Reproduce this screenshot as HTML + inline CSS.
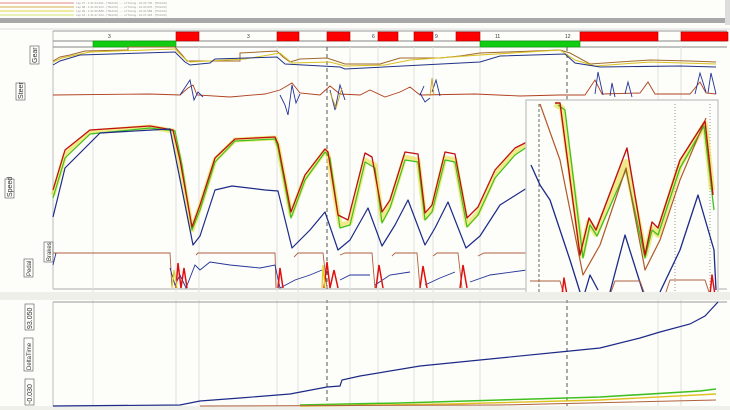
<!DOCTYPE html>
<html><head><meta charset="utf-8"><style>
html,body{margin:0;padding:0;background:#fdfdfa;width:730px;height:410px;overflow:hidden;font-family:"Liberation Sans",sans-serif}
svg{display:block}
</style></head><body>
<svg width="730" height="410" viewBox="0 0 730 410" xmlns="http://www.w3.org/2000/svg" font-family="Liberation Sans, sans-serif">
<rect width="730" height="410" fill="#fdfdf9"/>
<!-- legend -->
<g stroke-width="1.2">
<line x1="0" y1="3" x2="74" y2="3" stroke="#e8a0a0"/><line x1="0" y1="7" x2="74" y2="7" stroke="#e0c070"/>
<line x1="0" y1="11" x2="74" y2="11" stroke="#e8e070"/><line x1="0" y1="15" x2="74" y2="15" stroke="#e0ea90"/>
<line x1="0" y1="19" x2="74" y2="19" stroke="#7080c0"/>
</g>
<g font-size="3" fill="#999">
<text x="76" y="4">Lap 07 - 1:31.64.621 - [TRACK] ..... of Timing - 01:34.745 - [TRACK]</text>
<text x="76" y="8">Lap 08 - 1:31.56.913 - [TRACK] ..... of Timing - 01:34.876 - [TRACK]</text>
<text x="76" y="12">Lap 09 - 1:31.56.888 - [TRACK] ..... of Timing - 01:34.568 - [TRACK]</text>
<text x="76" y="16">Lap 10 - 1:31.47.464 - [TRACK] ..... of Timing - 01:37.418 - [TRACK]</text>
<text x="76" y="20">Lap 11 - 1:31.43.486 - [TRACK] ..... of Timing - 01:31.485 - [TRACK]</text>
</g>
<rect x="0" y="18" width="725" height="5" fill="#a8a8a8"/>
<rect x="725" y="0" width="5" height="25" fill="#ddd"/>
<!-- upper panel frame -->
<line x1="0" y1="29" x2="730" y2="29" stroke="#ddd"/>
<line x1="53" y1="31" x2="53" y2="289" stroke="#bbb"/>
<line x1="53" y1="31" x2="727" y2="31" stroke="#999"/>
<line x1="53" y1="41" x2="727" y2="41" stroke="#888"/>
<line x1="53" y1="47" x2="727" y2="47" stroke="#888"/>
<line x1="53" y1="289" x2="727" y2="289" stroke="#aaa"/>
<!-- grid -->
<g stroke="#e0e0e0">
<line x1="93" y1="47" x2="93" y2="410"/><line x1="176" y1="47" x2="176" y2="410"/><line x1="199" y1="47" x2="199" y2="410"/>
<line x1="277" y1="47" x2="277" y2="410"/><line x1="298" y1="47" x2="298" y2="410"/><line x1="350" y1="47" x2="350" y2="410"/>
<line x1="378" y1="47" x2="378" y2="410"/><line x1="414" y1="47" x2="414" y2="410"/><line x1="433" y1="47" x2="433" y2="410"/>
<line x1="480" y1="47" x2="480" y2="410"/><line x1="658" y1="47" x2="658" y2="410"/><line x1="681" y1="47" x2="681" y2="410"/>
</g>
<g stroke="#555" stroke-dasharray="4,3"><line x1="327" y1="47" x2="327" y2="410"/><line x1="567" y1="47" x2="567" y2="410"/></g>
<!-- sectors -->
<g fill="#f00" stroke="#a00" stroke-width="0.6">
<rect x="176" y="32" width="23" height="9"/><rect x="277" y="32" width="22" height="9"/><rect x="327" y="32" width="23" height="9"/>
<rect x="378" y="32" width="20" height="9"/><rect x="414" y="32" width="19" height="9"/><rect x="456" y="32" width="24" height="9"/>
<rect x="580" y="32" width="78" height="9"/><rect x="681" y="32" width="47" height="9"/>
</g>
<g fill="#1c1" stroke="#090" stroke-width="0.6"><rect x="93" y="41" width="83" height="6"/><rect x="480" y="41" width="100" height="6"/></g>
<g font-size="5" fill="#333"><text x="108" y="38">3</text><text x="247" y="38">3</text><text x="372" y="38">6</text><text x="435" y="38">9</text><text x="495" y="38">11</text><text x="565" y="38">12</text></g>
<!-- labels -->
<g font-size="7" fill="#333">
<g transform="translate(37,64) rotate(-90)"><rect x="0" y="-7" width="18" height="9" fill="none" stroke="#555" stroke-width="0.6"/><text x="1" y="0">Gear</text></g>
<g transform="translate(23,100) rotate(-90)"><rect x="0" y="-7" width="17" height="9" fill="none" stroke="#555" stroke-width="0.6"/><text x="1" y="0">Steer</text></g>
<g transform="translate(12,198) rotate(-90)"><rect x="0" y="-7" width="19" height="9" fill="none" stroke="#555" stroke-width="0.6"/><text x="1" y="0">Speed</text></g>
<g transform="translate(51,262) rotate(-90)"><rect x="0" y="-7" width="20" height="9" fill="none" stroke="#555" stroke-width="0.6"/><text x="1" y="0" font-size="6">Brakes</text></g>
<g transform="translate(31,277) rotate(-90)"><rect x="0" y="-7" width="18" height="9" fill="none" stroke="#555" stroke-width="0.6"/><text x="1" y="0" font-size="6">Pedal</text></g>
<g transform="translate(32,330) rotate(-90)"><rect x="0" y="-7" width="26" height="9" fill="none" stroke="#555" stroke-width="0.6"/><text x="1" y="0">93.050</text></g>
<g transform="translate(31,371) rotate(-90)"><rect x="0" y="-7" width="33" height="9" fill="none" stroke="#555" stroke-width="0.6"/><text x="1" y="0" font-size="6">DeltaTime</text></g>
<g transform="translate(32,405) rotate(-90)"><rect x="0" y="-7" width="26" height="9" fill="none" stroke="#555" stroke-width="0.6"/><text x="1" y="0">-0.030</text></g>
</g>
<!-- gear -->
<g fill="none" stroke-width="1">
<path d="M53 61 L60 57 L70 55 L85 51 L128 50 L128 47 L175 47 L183 56 L187 61 L240 61 L240 53 L277 51 L283 57 L290 62 L300 59 L327 58 L333 60 L345 64 L380 64 L400 58 L440 58 L460 56 L480 53 L560 50 L570 53 L590 64 L650 60 L690 61 L716 62" stroke="#a06a30"/>
<path d="M53 62 L62 58 L90 52 L175 49 L185 59 L190 62 L245 59 L280 53 L292 63 L330 62 L345 66 L385 65 L410 60 L480 55 L560 50 L575 60 L595 66 L650 62 L716 64" stroke="#d8c020"/>
<path d="M53 65 L60 61 L80 55 L175 52 L185 62 L190 65 L210 63 L215 59 L277 57 L285 64 L340 67 L345 69 L480 62 L500 56 L565 54 L575 63 L600 67 L680 66 L716 67" stroke="#223388"/>
</g>
<!-- steer -->
<g fill="none" stroke-width="0.9">
<path d="M53 95 L150 94 L180 95 L188 88 L193 85 L197 95 L230 97 L265 94 L280 90 L292 83 L300 93 L320 95 L330 86 L340 94 L360 95 L370 90 L385 97 L400 92 L410 87 L420 95 L475 94 L520 96 L560 95 L585 95 L595 80 L602 94 L640 93 L648 82 L655 94 L690 94 L700 82 L706 93 L716 94" stroke="#b04020"/>
<path d="M180 95 L190 80 L194 100 L198 92 L203 97 M280 95 L285 105 L288 115 L292 85 L296 103 L300 94 M330 90 L335 110 L340 85 L345 100 M420 93 L425 102 L430 98 M420 95 L424 86 M432 92 L436 80 L440 96 M595 94 L598 72 L603 95 M610 96 L612 83 L615 97 M625 94 L628 82 L632 97 M695 94 L700 73 L706 92 M708 93 L711 73 L716 94" stroke="#223399"/>
<path d="M330 92 L336 108 L342 88 M430 96 L432 78 L434 95" stroke="#d0a020"/>
</g>
<!-- speed -->
<g fill="none" stroke-linejoin="round">
<path d="M53 195 L65 155 L90 132 L150 127 L173 131 L180 162 L192 230 L200 207 L215 160 L235 140 L275 138 L278 146 L291 215 L305 178 L325 151 L328 155 L340 225 L350 223 L365 160 L375 165 L382 220 L390 205 L405 157 L418 160 L425 218 L432 210 L445 158 L455 160 L467 225 L478 213 L495 175 L515 152 L527 145" stroke="#e8e040" stroke-width="5" opacity="0.6"/>
<path d="M53 198 L65 158 L90 134 L150 128 L175 131 L182 165 L192 230 L200 210 L215 162 L235 141 L275 139 L278 148 L291 218 L305 180 L325 152 L330 158 L340 228 L350 225 L365 162 L375 168 L382 223 L390 208 L405 160 L418 162 L425 220 L432 212 L445 160 L455 162 L467 227 L478 215 L495 178 L515 155 L527 147" stroke="#40c020" stroke-width="1.2"/>
<path d="M53 190 L65 150 L90 130 L150 126 L173 130 L180 160 L192 227 L200 205 L215 158 L235 139 L275 137 L278 144 L291 212 L305 175 L325 149 L328 152 L338 215 L348 220 L365 153 L372 157 L382 212 L390 200 L405 152 L418 154 L425 213 L432 205 L445 152 L455 154 L467 218 L478 207 L495 170 L515 148 L527 142" stroke="#c01010" stroke-width="1.3"/>
<path d="M53 217 L65 168 L100 133 L170 129 L193 245 L200 236 L215 190 L232 186 L265 190 L278 191 L292 248 L310 230 L325 212 L338 250 L350 240 L368 208 L382 246 L395 225 L408 200 L425 245 L435 228 L448 202 L466 248 L480 236 L500 205 L527 188" stroke="#1c2a88" stroke-width="1.2"/>
</g>
<!-- pedal -->
<g fill="none" stroke-width="0.9">
<path d="M53 253 L170 253 L172 288 M196 255 L198 253 L275 253 L276 288 M294 257 L298 253 L323 253 L327 288 M340 255 L345 253 L372 253 L375 288 M392 256 L395 253 L417 253 L420 288 M433 256 L437 253 L458 253 L462 288 M478 256 L484 253 L527 253" stroke="#b06040"/>
<path d="M53 265 L56 253 M170 268 L175 285 L180 275 L186 288 L195 265 L200 270 L210 262 L230 265 L260 268 L275 265 L280 288 L295 280 L310 275 L322 270 M340 280 L350 275 L370 275 M375 285 L390 275 L410 272 M425 285 L440 278 L455 272 M470 282 L490 275 L527 270" stroke="#223399"/>
<path d="M176 288 L178 263 L181 288 L184 268 L187 288 M278 288 L280 268 L283 288 M324 288 L327 262 L330 288 L334 270 L338 288 M376 288 L379 265 L383 288 M420 288 L423 266 L427 288 M460 288 L463 265 L467 288" stroke="#e01010" stroke-width="1.5"/>
<path d="M172 288 L174 270 L177 288 M322 288 L323 265 L325 288" stroke="#e0d020" stroke-width="1.2"/>
</g>
<!-- inset -->
<rect x="526" y="100" width="192" height="197" fill="#fdfdf9" stroke="#ccc" stroke-width="1.5"/>
<g stroke="#666" stroke-dasharray="3,2"><line x1="539" y1="104" x2="539" y2="295"/></g>
<g stroke="#999" stroke-dasharray="1,2"><line x1="675" y1="104" x2="675" y2="295"/><line x1="710" y1="104" x2="710" y2="295"/></g>
<g fill="none" stroke-linejoin="round">
<path d="M555 104 L562 108 L582 255 L589 222 L596 234 L626 162 L645 255 L652 228 L658 235 L680 165 L705 124 L712 190" stroke="#e8e040" stroke-width="6" opacity="0.6"/>
<path d="M558 105 L565 110 L583 258 L590 225 L597 236 L626 170 L645 258 L652 230 L658 235 L680 168 L704 126 L714 210" stroke="#40c020" stroke-width="1.3"/>
<path d="M540 104 L560 160 L583 275 L600 245 L626 168 L645 270 L660 240 L680 180 L706 118" stroke="#b05828" stroke-width="1.2"/>
<path d="M555 103 L560 103 L580 255 L589 218 L596 230 L627 148 L645 255 L652 222 L658 228 L680 160 L705 121 L713 195" stroke="#c01010" stroke-width="1.4"/>
<path d="M531 165 L540 185 L550 200 L570 260 L580 292 M585 292 L590 275 L598 290 M610 292 L625 235 L643 292 M660 292 L680 250 L698 195 L714 250 L716 290" stroke="#1c2a88" stroke-width="1.3"/>
<path d="M530 281 L560 281 L564 295 M610 295 L615 281 L640 281 L645 295 M665 295 L670 280 L705 280 L710 295" stroke="#b06040" stroke-width="1"/>
<path d="M562 295 L564 278 L567 295 M710 295 L712 275 L715 295" stroke="#e01010" stroke-width="1.5"/>
</g>
<!-- separator -->
<rect x="0" y="292" width="730" height="8" fill="#efefea"/>
<line x1="53" y1="302" x2="727" y2="302" stroke="#999"/>
<line x1="53" y1="302" x2="53" y2="410" stroke="#bbb"/>
<rect x="0" y="406" width="730" height="4" fill="#f0f0ea"/>
<!-- delta -->
<g fill="none">
<path d="M53 406 L180 405 L200 401 L240 398 L290 394 L327 387 L340 386 L342 380 L360 376 L420 366 L480 360 L560 352 L600 348 L640 338 L660 332 L690 324 L705 316 L718 302" stroke="#1c2a88" stroke-width="1.2"/>
<path d="M300 405 L400 403 L500 400 L600 397 L700 391 L716 389" stroke="#40c020" stroke-width="1.6"/>
<path d="M300 406 L450 404 L600 400 L716 394" stroke="#e0c020" stroke-width="1.4"/>
<path d="M200 406 L500 405 L716 400" stroke="#b06040" stroke-width="1"/>
</g>
</svg>
</body></html>
